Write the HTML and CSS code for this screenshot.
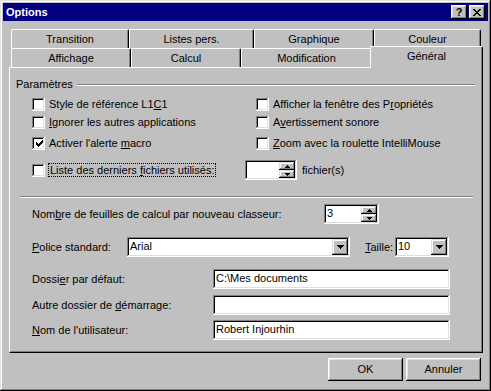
FILE: index.html
```html
<!DOCTYPE html>
<html lang="fr">
  <head>
    <meta charset="UTF-8" />
    <meta name="viewport" content="width=device-width, initial-scale=1.0" />
    <title>Options</title>
    <link rel="stylesheet" href="styles.css">
  </head>

  <body>
    <div class="window">
      <div class="titlebar">
        <span class="titlebar__text">Options</span>
        <div class="titlebar__buttons">
          <div class="title-btn">?</div>
          <div class="title-btn">
            <svg width="8" height="7" viewBox="0 0 8 7" shape-rendering="crispEdges">
              <path d="M0 0h2v1h-2zM6 0h2v1h-2zM1 1h2v1h-2zM5 1h2v1h-2zM2 2h4v1h-4zM3 3h2v1h-2zM2 4h4v1h-4zM1 5h2v1h-2zM5 5h2v1h-2zM0 6h2v1h-2zM6 6h2v1h-2z" fill="#000"/>
            </svg>
          </div>
        </div>
      </div>

      <div class="content">
        <!-- two rows of tabs, the front row holds the selected one -->
        <div class="tabs__row">
          <div class="tab tab--transition">Transition</div>
          <div class="tab tab--listes">Listes pers.</div>
          <div class="tab tab--graphique">Graphique</div>
          <div class="tab tab--couleur">Couleur</div>
        </div>
        <div class="tabs__row">
          <div class="tab tab--affichage">Affichage</div>
          <div class="tab tab--calcul">Calcul</div>
          <div class="tab tab--modification">Modification</div>
          <div class="tab tab--general tab--active">Général</div>
        </div>

        <div class="panel">
          <div class="group__title">
            <span>Paramètres</span>
            <span class="group__line"></span>
          </div>

          <div class="options">
            <div class="opt-row">
              <div class="check">
                <span class="check__box"></span>
                <span>Style de référence L1<u>C</u>1</span>
              </div>
              <div class="check">
                <span class="check__box"></span>
                <span>Afficher la fenêtre des P<u>r</u>opriétés</span>
              </div>
            </div>
            <div class="opt-row opt-row--second">
              <div class="check">
                <span class="check__box"></span>
                <span><u>I</u>gnorer les autres applications</span>
              </div>
              <div class="check">
                <span class="check__box"></span>
                <span>A<u>v</u>ertissement sonore</span>
              </div>
            </div>
            <div class="opt-row opt-row--third">
              <div class="check">
                <span class="check__box">
                  <svg width="7" height="7" viewBox="0 0 7 7" shape-rendering="crispEdges">
                    <path d="M6 0h1v1h-1zM5 1h2v1h-2zM0 2h1v1h-1zM4 2h3v1h-3zM0 3h2v1h-2zM3 3h3v1h-3zM0 4h5v1h-5zM1 5h3v1h-3zM2 6h1v1h-1z" fill="#000"/>
                  </svg>
                </span>
                <span>Activer l'alerte <u>m</u>acro</span>
              </div>
              <div class="check">
                <span class="check__box"></span>
                <span><u>Z</u>oom avec la roulette IntelliMouse</span>
              </div>
            </div>

            <div class="opt-files">
              <div class="check check--files">
                <span class="check__box"></span>
                <span class="focus">Liste des derniers <u>f</u>ichiers utilisés:</span>
              </div>
              <div class="spin spin--files">
                <div class="spin__text"></div>
                <div class="spin__btns">
                  <div class="spin__btn">
                    <svg width="5" height="3" viewBox="0 0 5 3" shape-rendering="crispEdges"><path d="M2 0h1v1h-1zM1 1h3v1h-3zM0 2h5v1h-5z" fill="#000"/></svg>
                  </div>
                  <div class="spin__btn">
                    <svg width="5" height="3" viewBox="0 0 5 3" shape-rendering="crispEdges"><path d="M0 0h5v1h-5zM1 1h3v1h-3zM2 2h1v1h-1z" fill="#000"/></svg>
                  </div>
                </div>
              </div>
              <span class="unit">fichier(s)</span>
            </div>
          </div>

          <div class="separator"></div>

          <div class="field-row field-row--sheets">
            <span class="field-label field-label--sheets">Nom<u>b</u>re de feuilles de calcul par nouveau classeur:</span>
            <div class="spin spin--sheets">
              <div class="spin__text">3</div>
              <div class="spin__btns">
                <div class="spin__btn">
                  <svg width="5" height="3" viewBox="0 0 5 3" shape-rendering="crispEdges"><path d="M2 0h1v1h-1zM1 1h3v1h-3zM0 2h5v1h-5z" fill="#000"/></svg>
                </div>
                <div class="spin__btn">
                  <svg width="5" height="3" viewBox="0 0 5 3" shape-rendering="crispEdges"><path d="M0 0h5v1h-5zM1 1h3v1h-3zM2 2h1v1h-1z" fill="#000"/></svg>
                </div>
              </div>
            </div>
          </div>

          <div class="field-row field-row--font">
            <span class="field-label field-label--font"><u>P</u>olice standard:</span>
            <div class="combo combo--font">
              <div class="combo__text">Arial</div>
              <div class="combo__btn">
                <svg width="7" height="4" viewBox="0 0 7 4" shape-rendering="crispEdges"><path d="M0 0h7v1h-7zM1 1h5v1h-5zM2 2h3v1h-3zM3 3h1v1h-1z" fill="#000"/></svg>
              </div>
            </div>
            <span class="field-label field-label--size"><u>T</u>aille:</span>
            <div class="combo combo--size">
              <div class="combo__text">10</div>
              <div class="combo__btn">
                <svg width="7" height="4" viewBox="0 0 7 4" shape-rendering="crispEdges"><path d="M0 0h7v1h-7zM1 1h5v1h-5zM2 2h3v1h-3zM3 3h1v1h-1z" fill="#000"/></svg>
              </div>
            </div>
          </div>

          <div class="field-row field-row--folder">
            <span class="field-label field-label--path">Dossi<u>e</u>r par défaut:</span>
            <div class="textbox">C:\Mes documents</div>
          </div>
          <div class="field-row field-row--alt">
            <span class="field-label field-label--path">Autre dossier de <u>d</u>émarrage:</span>
            <div class="textbox"></div>
          </div>
          <div class="field-row field-row--user">
            <span class="field-label field-label--path"><u>N</u>om de l'utilisateur:</span>
            <div class="textbox">Robert Injourhin</div>
          </div>
        </div>

        <div class="footer">
          <div class="button">OK</div>
          <div class="button">Annuler</div>
        </div>
      </div>
    </div>
  </body>
</html>
```

FILE: styles.css
```css
/* Reset */
html {
  box-sizing: border-box;
}

*,
*:before,
*:after {
  box-sizing: inherit;
}

body {
  margin: 0;
  background: #c0c0c0;
  font-family: "Liberation Sans", Arial, sans-serif;
  font-size: 11px;
  line-height: 13px;
  color: #000;
}

u {
  text-underline-offset: 1px;
}

/* Window frame */
.window {
  width: 491px;
  height: 391px;
  padding: 3px;
  background: #c0c0c0;
  box-shadow: inset -1px -1px #000, inset 1px 1px #dfdfdf,
    inset -2px -2px #808080, inset 2px 2px #fff;
}

.titlebar {
  display: flex;
  align-items: center;
  justify-content: space-between;
  height: 18px;
  padding: 0 3px 0 3px;
  background: #000080;
  color: #fff;
}

.titlebar__text {
  font-weight: bold;
}

.titlebar__buttons {
  display: flex;
  gap: 2px;
}

.title-btn {
  display: flex;
  align-items: center;
  justify-content: center;
  width: 16px;
  height: 14px;
  background: #c0c0c0;
  color: #000;
  font-weight: bold;
  font-size: 11px;
  line-height: 1;
  box-shadow: inset -1px -1px #000, inset 1px 1px #fff,
    inset -2px -2px #808080, inset 2px 2px #dfdfdf;
}

.content {
  padding: 8px 5px 0 6px;
}

/* Tabs */
.tabs__row {
  display: flex;
  align-items: flex-start;
  padding-left: 2px;
}

.tab {
  height: 19px;
  padding-top: 3px;
  text-align: center;
  background: #c0c0c0;
  border-top: 1px solid #fff;
  border-left: 1px solid #fff;
  border-right: 1px solid #000;
  border-radius: 2px 2px 0 0;
  box-shadow: inset -1px 0 #808080;
}

.tab--transition { width: 118px; }
.tab--listes { width: 125px; }
.tab--graphique { width: 120px; }
.tab--couleur { width: 107px; }
.tab--affichage { width: 120px; }
.tab--calcul { width: 110px; }
.tab--modification { width: 131px; }
.tab--general { width: 113px; }

.tab--active {
  position: relative;
  z-index: 1;
  height: 22px;
  margin: -2px -2px -1px;
}

/* Panel */
.panel {
  height: 286px;
  padding: 10px 7px 0 6px;
  border-top: 1px solid #fff;
  border-left: 1px solid #fff;
  border-right: 1px solid #000;
  border-bottom: 1px solid #000;
  box-shadow: inset -1px -1px #808080;
}

.group__title {
  display: flex;
  align-items: center;
  height: 13px;
}

.group__line {
  flex: 1;
  margin-left: 4px;
  margin-top: 1px;
  border-top: 1px solid #808080;
  border-bottom: 1px solid #fff;
}

.options {
  margin-top: 7px;
  padding-left: 16px;
}

.opt-row {
  display: grid;
  grid-template-columns: 224px 1fr;
  height: 13px;
}

.opt-row--second {
  margin-top: 5px;
}

.opt-row--third {
  margin-top: 8px;
}

.check {
  display: flex;
  align-items: center;
  white-space: nowrap;
}

.check__box {
  display: flex;
  align-items: center;
  justify-content: center;
  flex: none;
  width: 13px;
  height: 13px;
  margin-right: 4px;
  background: #fff;
  box-shadow: inset -1px -1px #fff, inset 1px 1px #808080,
    inset -2px -2px #dfdfdf, inset 2px 2px #000;
}

.check__box svg {
  margin-left: 1px;
}

.opt-files {
  display: flex;
  align-items: center;
  height: 20px;
  margin-top: 10px;
}

.check--files {
  width: 213px;
}

.check--files .check__box {
  margin-right: 3px;
}

.focus {
  padding: 0 1px;
  line-height: 12px;
  border: 1px dotted #000;
}

.unit {
  margin-left: 5px;
}

/* Sunken fields */
.spin,
.combo,
.textbox {
  display: flex;
  height: 20px;
  padding: 2px;
  background: #fff;
  box-shadow: inset -1px -1px #fff, inset 1px 1px #808080,
    inset -2px -2px #dfdfdf, inset 2px 2px #000;
}

.spin__text,
.combo__text {
  flex: 1;
  padding: 1px 0 0 1px;
  white-space: nowrap;
}

.spin__btns {
  display: flex;
  flex-direction: column;
  width: 16px;
}

.spin__btn,
.combo__btn {
  display: flex;
  align-items: center;
  justify-content: center;
  background: #c0c0c0;
  box-shadow: inset -1px -1px #000, inset 1px 1px #dfdfdf,
    inset -2px -2px #808080, inset 2px 2px #fff;
}

.spin__btn {
  height: 8px;
}

.combo__btn {
  width: 16px;
  height: 16px;
}

.spin--files {
  width: 52px;
}

.spin--sheets {
  width: 55px;
}

.textbox {
  width: 237px;
  padding: 3px 2px 0 3px;
  white-space: nowrap;
}

.separator {
  margin: 16px 2px 0 4px;
  border-top: 1px solid #808080;
  border-bottom: 1px solid #fff;
}

.field-row {
  display: flex;
  align-items: center;
  height: 20px;
  padding-left: 16px;
}

.field-row--sheets { margin-top: 6px; }
.field-row--font { margin-top: 13px; }
.field-row--folder { margin-top: 12px; }
.field-row--alt { margin-top: 6px; }
.field-row--user { margin-top: 5px; }

.field-label {
  white-space: nowrap;
}

.field-label--sheets { width: 292px; }
.field-label--font { width: 95px; }
.field-label--path { width: 181px; }

.field-label--size {
  width: 30px;
  margin-left: 15px;
}

.combo--font { width: 223px; }
.combo--size { width: 54px; }

/* Buttons */
.footer {
  display: flex;
  justify-content: flex-end;
  gap: 3px;
  margin-top: 5px;
  padding-right: 2px;
}

.button {
  width: 75px;
  height: 23px;
  line-height: 23px;
  text-align: center;
  background: #c0c0c0;
  box-shadow: inset -1px -1px #000, inset 1px 1px #fff,
    inset -2px -2px #808080, inset 2px 2px #dfdfdf;
}
```
